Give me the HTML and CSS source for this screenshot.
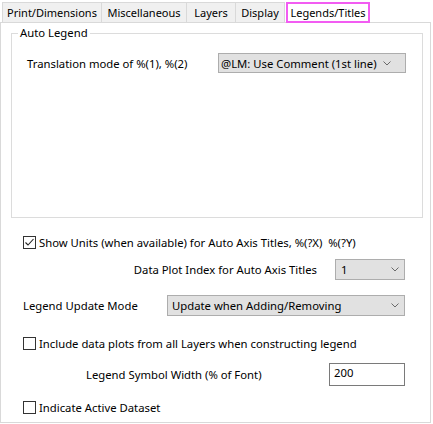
FILE: index.html
```html
<!DOCTYPE html>
<html>
<head>
<meta charset="utf-8">
<link rel="stylesheet" href="styles.css">
</head>
<body>
<div class="tabs">
  <div class="tab t1">Print/Dimensions</div>
  <div class="tab t2">Miscellaneous</div>
  <div class="tab t3">Layers</div>
  <div class="tab t4">Display</div>
  <div class="tab sel">Legends/Titles</div>
</div>
<div class="panel">
  <div class="group">
    <div class="group-title">Auto Legend</div>
    <div class="row grow1">
      <span class="lbl">Translation mode of %(1), %(2)</span>
      <div class="select s1"><span>@LM: Use Comment (1st line)</span><svg class="chev" width="8" height="5" viewBox="0 0 8 5"><polyline points="0.5,0.5 4,4 7.5,0.5" fill="none" stroke="#6a6a6a" stroke-width="1"/></svg></div>
    </div>
  </div>
  <div class="row r-units">
    <span class="cb"><svg width="11" height="11" viewBox="0 0 11 11"><polyline points="1.5,5.5 4,8 9.5,2" fill="none" stroke="#222" stroke-width="1.1"/></svg></span>
    <span class="lbl">Show Units (when available) for Auto Axis Titles, %(?X)&nbsp; %(?Y)</span>
  </div>
  <div class="row r-index">
    <span class="lbl">Data Plot Index for Auto Axis Titles</span>
    <div class="select s2"><span>1</span><svg class="chev" width="8" height="5" viewBox="0 0 8 5"><polyline points="0.5,0.5 4,4 7.5,0.5" fill="none" stroke="#6a6a6a" stroke-width="1"/></svg></div>
  </div>
  <div class="row r-mode">
    <span class="lbl">Legend Update Mode</span>
    <div class="select s3"><span>Update when Adding/Removing</span><svg class="chev" width="8" height="5" viewBox="0 0 8 5"><polyline points="0.5,0.5 4,4 7.5,0.5" fill="none" stroke="#6a6a6a" stroke-width="1"/></svg></div>
  </div>
  <div class="row r-include">
    <span class="cb"></span>
    <span class="lbl">Include data plots from all Layers when constructing legend</span>
  </div>
  <div class="row r-width">
    <span class="lbl">Legend Symbol Width (% of Font)</span>
    <div class="input">200</div>
  </div>
  <div class="row r-active">
    <span class="cb"></span>
    <span class="lbl">Indicate Active Dataset</span>
  </div>
</div>
</body>
</html>
```
FILE: styles.css
```css
* { box-sizing: border-box; }
html, body { margin: 0; padding: 0; }
body {
  width: 433px;
  height: 424px;
  background: #ffffff;
  font-family: "Noto Sans", "Open Sans", sans-serif;
  font-size: 11.3px;
  color: #000;
  overflow: hidden;
}
.tabs {
  display: flex;
  height: 22px;
  padding-left: 2px;
  padding-top: 2px;
  position: relative;
  z-index: 1;
}
.tab {
  height: 20px;
  background: #f0f0f0;
  border: 1px solid #d9d9d9;
  border-bottom: none;
  display: flex;
  align-items: center;
  justify-content: center;
  font-size: 11px;
  line-height: 14px;
  white-space: nowrap;
}
.t1 { width: 100px; }
.t2 { width: 86px; margin-left: -1px; }
.t3 { width: 50px; margin-left: -1px; }
.t4 { width: 50px; margin-left: -1px; }
.sel {
  width: 84px;
  height: 21px;
  margin-left: 1px;
  background: #fff;
  border: 2px solid #f25cf2;
}
.panel {
  width: 431px;
  height: 401px;
  border: 1px solid #d9d9d9;
  padding: 10px 0 0 10px;
  background: #fff;
}
.group {
  width: 412px;
  height: 185px;
  border: 1px solid #dcdcdc;
  padding: 0 16px 0 15px;
}
.group-title {
  display: block;
  width: max-content;
  margin-top: -8px;
  margin-left: -9px;
  padding: 0 2px;
  background: #fff;
  line-height: 14px;
  height: 14px;
}
.row {
  display: flex;
  align-items: center;
  white-space: nowrap;
}
.grow1 {
  margin-top: 13px;
  height: 20px;
  justify-content: space-between;
}
.select {
  display: flex;
  align-items: center;
  justify-content: space-between;
  background: #e1e1e1;
  border: 1px solid #adadad;
  height: 21px;
  flex: none;
}
.s1 { width: 188px; height: 20px; padding: 0 14px 0 2px; }
.s2 { width: 70px; padding: 0 5px 0 5px; margin-left: 18px; }
.s3 { width: 238px; padding: 0 5px 0 4px; }
.chev { display: block; }
.cb {
  width: 13px;
  height: 13px;
  border: 1px solid #333;
  background: #fff;
  display: flex;
  align-items: center;
  justify-content: center;
  margin-right: 3px;
  flex: none;
}
.r-units { margin-top: 18px; height: 13px; padding-left: 12px; }
.r-index { margin-top: 10px; height: 21px; }
.r-index .lbl { width: 306px; text-align: right; }
.r-mode { margin-top: 15px; height: 21px; padding-left: 12px; }
.r-mode .lbl { width: 144px; flex: none; }
.r-include { margin-top: 21px; height: 13px; padding-left: 12px; }
.r-width { margin-top: 13px; height: 23px; padding-left: 75px; }
.r-width .lbl { width: 243px; flex: none; }
.input {
  width: 76px;
  height: 23px;
  border: 1px solid #7a7a7a;
  background: #fff;
  padding: 1px 0 0 4px;
  line-height: 16px;
}
.r-active { margin-top: 15px; height: 13px; padding-left: 12px; }
```
